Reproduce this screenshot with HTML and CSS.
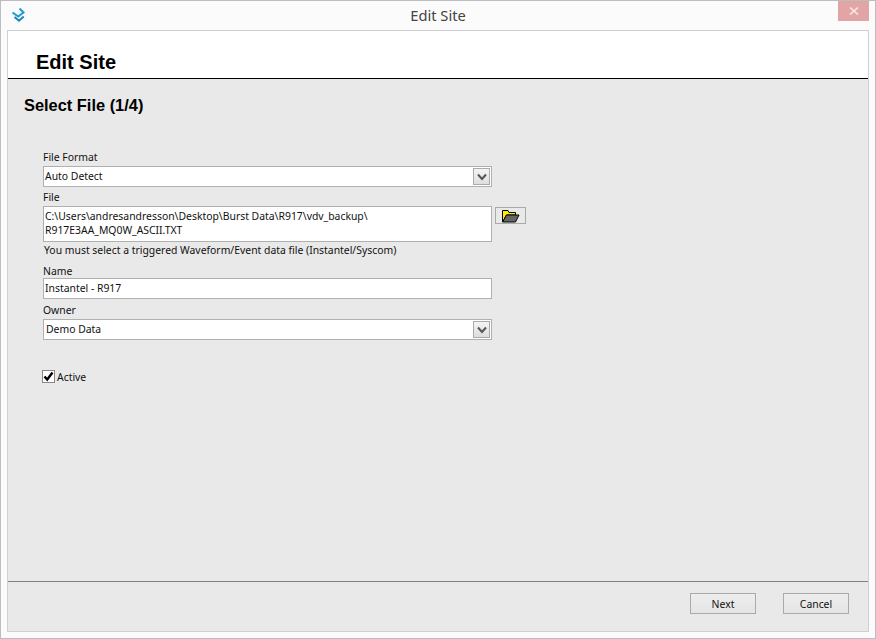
FILE: index.html
```html
<!DOCTYPE html>
<html lang="en">
<head>
<meta charset="utf-8">
<title>Edit Site</title>
<link rel="stylesheet" href="styles.css">
</head>
<body>
<div class="window">
  <div class="titlebar">
    <svg class="logo" width="16" height="16" viewBox="0 0 16 16">
      <path d="M9.5 0.5 L13.5 4.5 L8.3 8.5 L2.5 4.5" fill="none" stroke="#1c9ad6" stroke-width="2"/>
      <path d="M4.5 9 L9 12.8 L13.7 8.6" fill="none" stroke="#1a86bd" stroke-width="2"/>
    </svg>
    <span class="title">Edit Site</span>
    <div class="close"><svg width="10" height="8" viewBox="0 0 10 8"><path d="M1 0.5 L9 7.5 M9 0.5 L1 7.5" stroke="#fbe6e6" stroke-width="1.6"/></svg></div>
  </div>
  <div class="panel">
    <header class="head"><h1>Edit Site</h1></header>
    <main class="body">
      <h2>Select File (1/4)</h2>
      <form class="form">
        <label class="lbl l-format">File Format</label>
        <div class="field select"><span>Auto Detect</span><div class="arrow"><svg width="10" height="8" viewBox="0 0 10 8"><path d="M1 1.5 L5 6 L9 1.5" fill="none" stroke="#555" stroke-width="2"/></svg></div></div>
        <label class="lbl l-file">File</label>
        <div class="file-row">
          <div class="field area">C:\Users\andresandresson\Desktop\Burst Data\R917\vdv_backup\<br>R917E3AA_MQ0W_ASCII.TXT</div>
          <div class="browse"><svg width="19" height="14" viewBox="0 0 19 14"><path d="M1.5 13 V1.5 H7 L8 3.5 H14.5 V6 H5.5 L1.5 13 Z" fill="#ffee00" stroke="#000" stroke-width="1"/><path d="M1.5 13 L5.5 6 H18 L14.5 13 Z" fill="#666" stroke="#000" stroke-width="1"/></svg></div>
        </div>
        <p class="hint">You must select a triggered Waveform/Event data file (Instantel/Syscom)</p>
        <label class="lbl l-name">Name</label>
        <div class="field text">Instantel - R917</div>
        <label class="lbl l-owner">Owner</label>
        <div class="field select"><span class="owner">Demo Data</span><div class="arrow"><svg width="10" height="8" viewBox="0 0 10 8"><path d="M1 1.5 L5 6 L9 1.5" fill="none" stroke="#555" stroke-width="2"/></svg></div></div>
        <div class="active">
          <div class="check"><svg width="11" height="11" viewBox="0 0 11 11"><path d="M1.5 5.5 L4.2 8.5 L9.5 1.5" fill="none" stroke="#000" stroke-width="2.4"/></svg></div>
          <span>Active</span>
        </div>
      </form>
    </main>
    <footer class="foot">
      <button class="btn" type="button">Next</button>
      <button class="btn" type="button">Cancel</button>
    </footer>
  </div>
</div>
</body>
</html>
```
FILE: styles.css
```css
* { box-sizing: border-box; }
html, body { margin: 0; padding: 0; width: 876px; height: 639px; overflow: hidden; }
body { font-family: "Noto Sans", "Open Sans", sans-serif; font-size: 10.4px; color: #111; }
.window { width: 876px; height: 639px; background: #fbfbfb; border: 1px solid #bdbdbd; display: flex; flex-direction: column; padding: 0 6px 6px; }
.titlebar { height: 29px; flex: none; display: flex; align-items: center; justify-content: center; position: relative; padding-bottom: 2px; }
.title { font-size: 14.7px; color: #444; }
.logo { position: absolute; left: 3px; top: 7px; }
.close { position: absolute; right: 0; top: 0; width: 31px; height: 20px; background: #e2a5a5; display: flex; align-items: center; justify-content: center; }
.panel { flex: 1; display: flex; flex-direction: column; border: 1px solid #d0d0d0; background: #e9e9e9; }
.head { height: 48px; flex: none; background: #fff; border-bottom: 1px solid #000; padding: 19px 0 0 28px; }
h1 { margin: 0; font: bold 20px/24px "Liberation Sans", Arial, sans-serif; color: #000; }
.body { flex: 1; padding: 16px 0 0 16px; }
h2 { margin: 0; font: bold 16.4px/20px "Liberation Sans", Arial, sans-serif; color: #000; }
.form { display: flex; flex-direction: column; width: 484px; margin: 34px 0 0 19px; }
.lbl { line-height: 15px; height: 15px; display: block; }
.l-format { margin-top: 1px; margin-bottom: 1px; }
.l-file { margin-top: 3px; margin-bottom: 1px; }
.l-name { margin-top: 6px; margin-bottom: -1px; }
.l-owner { margin-top: 4px; margin-bottom: 1px; }
.field { width: 449px; background: #fff; border: 1px solid #b0b0b0; padding: 0 1px; line-height: 15px; color: #111; }
.select { height: 21px; display: flex; align-items: center; justify-content: space-between; padding-right: 1px; }
.owner { padding-left: 1px; }
.arrow { width: 17px; height: 17px; background: linear-gradient(#f4f4f4, #dedede); border: 1px solid #aaa; display: flex; align-items: center; justify-content: center; }
.file-row { display: flex; gap: 3px; align-items: flex-start; }
.area { height: 36px; padding-top: 2px; line-height: 14px; }
.browse { width: 31px; height: 17px; margin-top: 1px; background: #e9e9e9; border: 1px solid #aaa; display: flex; align-items: center; justify-content: center; }
.browse svg { width: 19px; height: 14px; }
.hint { margin: 1px 0 0 1px; line-height: 15px; }
.text { height: 21px; line-height: 19px; }
.active { display: flex; align-items: center; gap: 2px; margin: 29px 0 0 -1px; height: 15px; }
.check { width: 13px; height: 13px; background: #fff; border: 1px solid #888; display: flex; align-items: center; justify-content: center; }
.foot { height: 50px; flex: none; border-top: 1px solid #808080; display: flex; justify-content: flex-end; gap: 27px; padding: 11px 19px 0 0; }
.btn { width: 66px; height: 21px; padding: 0; background: linear-gradient(#ededed, #e5e5e5); border: 1px solid #aaa; font: 10.4px "Noto Sans", "Open Sans", sans-serif; color: #111; }
```
